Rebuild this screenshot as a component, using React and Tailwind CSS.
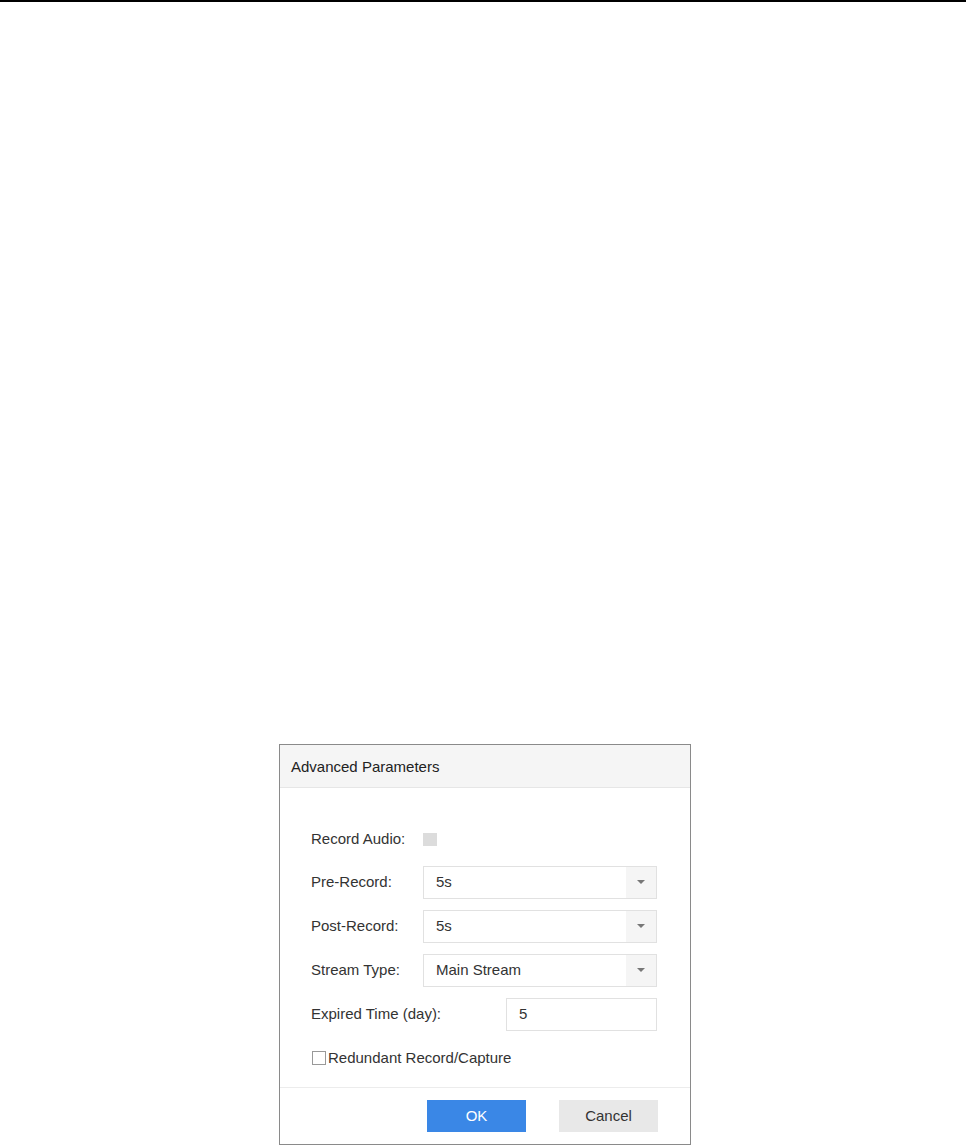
import { useState } from 'react';

const Caret = () => (
  <svg width="8" height="4" viewBox="0 0 8 4" className="block">
    <path d="M0 0h8L4 4z" fill="#777" />
  </svg>
);

// select-like field with the grey caret block on the right
const SelectField = ({ value }) => (
  <div className="flex h-[33px] w-[234px] border border-[#e1e1e1] bg-white">
    <div className="flex flex-1 items-center pl-[12px] text-[15px] text-[#333]">{value}</div>
    <div className="flex w-[30px] items-center justify-center bg-[#f5f5f5]">
      <Caret />
    </div>
  </div>
);

const Row = ({ label, width = 'w-[112px]', children }) => (
  <div className="flex items-center">
    <span className={`${width} text-[15px] text-[#333]`}>{label}</span>
    {children}
  </div>
);

export default function App() {
  const [redundant, setRedundant] = useState(false);

  return (
    <div className="relative h-[1146px] w-[970px] bg-white font-['Liberation_Sans',Arial,sans-serif]">
      <div className="h-[2px] w-[966px] bg-black" />

      <div className="pl-[279px] pt-[742px]">
        <div className="flex h-[401px] w-[412px] flex-col border border-[#8a8a8a] bg-white">
          {/* Header */}
          <div className="flex h-[43px] items-center border-b border-[#e6e6e6] bg-[#f5f5f5] pl-[11px] pt-[3px] text-[15px] text-[#222]">
            Advanced Parameters
          </div>

          {/* Body */}
          <div className="flex flex-1 flex-col pl-[31px] pt-[40px]">
            <Row label="Record Audio:">
              <span className="h-[13px] w-[14px] bg-[#dcdcdc]" />
            </Row>

            <div className="mt-[15px] flex flex-col gap-[11px]">
              <Row label="Pre-Record:">
                <SelectField value="5s" />
              </Row>
              <Row label="Post-Record:">
                <SelectField value="5s" />
              </Row>
              <Row label="Stream Type:">
                <SelectField value="Main Stream" />
              </Row>
              <Row label="Expired Time (day):" width="w-[195px]">
                <div className="flex h-[33px] w-[151px] items-center border border-[#e1e1e1] pl-[12px] text-[15px] text-[#333]">
                  5
                </div>
              </Row>
            </div>

            <label
              className="mt-[16px] flex cursor-pointer items-center text-[15px] text-[#333]"
              onClick={() => setRedundant(!redundant)}
            >
              <span className="ml-[1px] mr-[2px] h-[14px] w-[14px] border border-[#999] bg-white" />
              Redundant Record/Capture
            </label>
          </div>

          {/* Footer */}
          <div className="flex h-[57px] items-start justify-end gap-[33px] border-t border-[#ececec] pr-[32px] pt-[12px]">
            <button className="h-[32px] w-[99px] bg-[#3a87e6] text-[15px] text-white">OK</button>
            <button className="h-[32px] w-[99px] bg-[#e8e8e8] text-[15px] text-[#333]">Cancel</button>
          </div>
        </div>
      </div>
    </div>
  );
}
